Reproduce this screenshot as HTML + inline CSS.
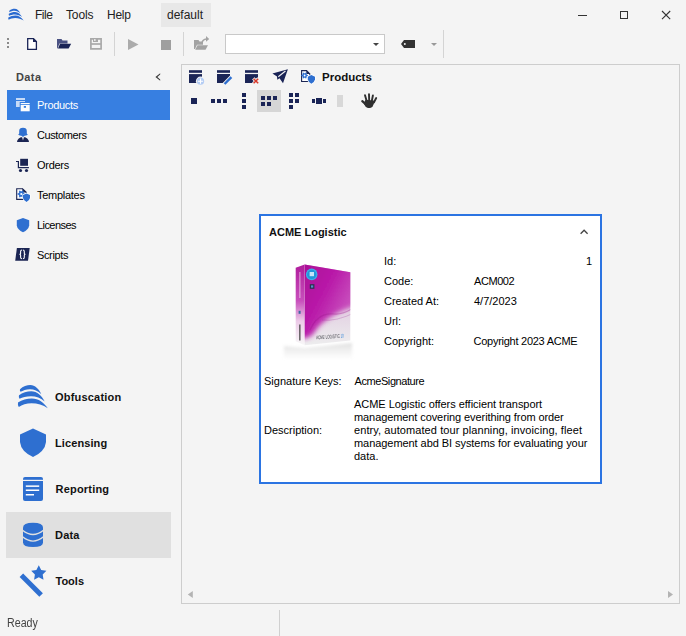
<!DOCTYPE html>
<html><head><meta charset="utf-8">
<style>
*{box-sizing:border-box;margin:0;padding:0}
html,body{width:686px;height:636px;overflow:hidden;background:#f4f4f4;font-family:"Liberation Sans",sans-serif;color:#000}
.a{position:absolute}
.t11{position:absolute;font-size:11px;line-height:13px;white-space:nowrap}
.t12{position:absolute;font-size:12px;line-height:14px;white-space:nowrap}
.b{font-weight:bold}
svg{position:absolute;overflow:visible}
</style></head><body>

<!-- ===== title / menu bar ===== -->
<svg style="left:0;top:0" width="30" height="30" viewBox="0 0 30 30">
  <g fill="#2a6ad0" transform="translate(8.3 8.7) scale(0.515 0.507) translate(-18 -385)">
    <path d="M20 389.2 C23 386 27 385 30.3 385 C35 385 39 389 41.3 394.2 C38 391 34 389.2 30 389.2 C26 389.2 23 390.5 20.5 391.8 Q19.5 390.5 20 389.2 Z"/>
    <path d="M19 395.2 C22.5 392.5 27 391.3 31.3 391.3 C37 391.3 42 396 44.7 401.5 C41 398 36 396.3 31 396.3 C26 396.3 22.5 397.5 19.5 398.8 Q18.4 397 19 395.2 Z"/>
    <path d="M18 402.6 C22 399.8 27 398.4 31.8 398.4 C38.5 398.4 44 402.5 47.8 408.3 C43 405 37.5 403.3 31.5 403.3 C26.5 403.3 22 404.8 18.8 407 Q17.5 405 18 402.6 Z"/>
  </g>
</svg>
<div class="t12" style="left:35px;top:8px;color:#222;letter-spacing:-0.5px">File</div>
<div class="t12" style="left:66px;top:8px;color:#222;letter-spacing:-0.14px">Tools</div>
<div class="t12" style="left:107px;top:8px;color:#222;letter-spacing:-0.25px">Help</div>
<div class="a" style="left:161px;top:3px;width:50px;height:24px;background:#e8e8e8"></div>
<div class="t12" style="left:167px;top:8px;color:#222">default</div>

<!-- window controls -->
<div class="a" style="left:578px;top:15px;width:9px;height:1px;background:#333"></div>
<div class="a" style="left:620px;top:11px;width:8px;height:8px;border:1px solid #333"></div>
<svg style="left:660px;top:9px" width="12" height="12" viewBox="660 9 12 12"><path d="M662 11 L670.2 19.2 M670.2 11 L662 19.2" stroke="#333" stroke-width="1.1"/></svg>

<!-- ===== toolbar ===== -->
<svg style="left:0;top:0" width="686" height="60" viewBox="0 0 686 60">
  <!-- grip -->
  <g fill="#8a8a8a"><rect x="7" y="38" width="2" height="2"/><rect x="7" y="42" width="2" height="2"/><rect x="7" y="46" width="2" height="2"/></g>
  <!-- new doc -->
  <path d="M27.7 38.7 H33.5 L36.4 41.6 V49.3 H27.7 Z" fill="#fff" stroke="#1a2456" stroke-width="1.3"/>
  <path d="M33 38 L37 42 H33 Z" fill="#1a2456"/>
  <!-- open folder -->
  <path d="M57 39 H61.5 L62.5 40.5 H67.5 V43.5 H59.5 L57.5 48.5 H57 Z" fill="#4a5283"/>
  <path d="M60 43.8 H71.2 L68.6 48.6 H58 Z" fill="#1a2456"/>
  <!-- save (disabled) -->
  <g fill="none" stroke="#a9a9a9" stroke-width="1.7">
    <path d="M90.9 38.9 H101.1 V48.9 H90.9 Z"/>
    <path d="M91 44 H101"/>
  </g>
  <rect x="93" y="38" width="5" height="4" fill="#a9a9a9"/>
  <rect x="94.2" y="39" width="1.3" height="2" fill="#f4f4f4"/>
  <!-- separators -->
  <rect x="114" y="32" width="1" height="24" fill="#d4d4d4"/>
  <rect x="183" y="32" width="1" height="24" fill="#d4d4d4"/>
  <rect x="443" y="30" width="1" height="28" fill="#d4d4d4"/>
  <!-- play / stop -->
  <path d="M128 39 L138.5 44.5 L128 50 Z" fill="#ababab"/>
  <rect x="161" y="40" width="10" height="10" fill="#9f9f9f"/>
  <!-- share folder -->
  <path d="M194 40 H198.5 L199.5 41.5 H203 V44.8 H197 L195 49 H194 Z" fill="#a3a3a3"/>
  <path d="M197.5 45.2 H208 L205.5 49.7 H195.2 Z" fill="#a3a3a3"/>
  <path d="M202 43 Q202.5 39.5 206.5 39" fill="none" stroke="#a3a3a3" stroke-width="1.5"/>
  <path d="M206 36 L209.2 38.9 L206 41.8 Z" fill="#a3a3a3"/>
  <!-- combo -->
  <rect x="225.5" y="34.5" width="159" height="19" fill="#fff" stroke="#c9c9c9" stroke-width="1"/>
  <path d="M373 43 H379 L376 46 Z" fill="#444"/>
  <!-- tag -->
  <path d="M404 40 H415 V48 H404 L401 44 Z" fill="#333"/>
  <circle cx="404.8" cy="44" r="1" fill="#f4f4f4"/>
  <path d="M431 43 H437 L434 46 Z" fill="#999"/>
</svg>

<!-- ===== sidebar ===== -->
<div class="t11 b" style="left:16px;top:71px;color:#444;letter-spacing:0.4px">Data</div>
<svg style="left:0;top:60px" width="180" height="210" viewBox="0 60 180 210">
  <path d="M160.2 73.2 L155.4 77 L160.2 80.8 L160.2 79.6 L157.4 77 L160.2 74.4 Z" fill="#3c3c3c"/>
  <rect x="7" y="90" width="163" height="30" fill="#377fe1"/>
  <!-- products icon -->
  <g fill="#c6daf7"><rect x="16" y="98" width="9" height="2"/><rect x="16" y="101" width="9" height="6"/></g>
  <rect x="19.7" y="102" width="10.8" height="10.3" fill="#377fe1"/>
  <g fill="#fdfdfd"><rect x="20.7" y="103" width="9" height="1.2"/><rect x="20.7" y="105" width="9" height="6.3"/></g>
  <rect x="23.8" y="106" width="2.2" height="1.8" fill="#377fe1"/>
  <!-- customers icon -->
  <path d="M19.2 133.4 V131 Q19.2 127.8 23 127.8 Q26.8 127.8 26.8 131 V133.4 L27.8 134.8 Q26 135.6 24.6 135.8 L23 136.9 L21.4 135.8 Q20 135.6 18.2 134.8 Z" fill="#2e6fd0"/>
  <path d="M17 142 L17.4 140.2 Q18.4 138.2 20.8 137.2 L22.1 137.3 L23 140.4 L23.9 137.3 L25.2 137.2 Q27.6 138.2 28.6 140.2 L29 142 Z" fill="#1b2553"/>
  <!-- orders icon -->
  <path d="M16 161.5 H18.4 V167.6 H28.9" fill="none" stroke="#1b2553" stroke-width="1.2"/>
  <rect x="20.2" y="158.8" width="7.8" height="7" fill="#1b2553"/>
  <circle cx="20.5" cy="170.5" r="1.6" fill="#1b2553"/><circle cx="26.5" cy="170.5" r="1.6" fill="#1b2553"/>
  <!-- templates icon -->
  <path d="M16.7 188.7 H22.5 L26.4 192.5 V199.4 H16.7 Z" fill="#fff" stroke="#1b2553" stroke-width="1.1"/>
  <path d="M22.4 188.2 L27 192.6 H22.4 Z" fill="#1b2553"/>
  <path d="M23.98 193.20 L25.04 193.31 L25.04 194.69 L23.98 194.80 L23.33 195.93 L23.77 196.89 L22.57 197.58 L21.95 196.72 L20.65 196.72 L20.03 197.58 L18.83 196.89 L19.27 195.93 L18.62 194.80 L17.56 194.69 L17.56 193.31 L18.62 193.20 L19.27 192.07 L18.83 191.11 L20.03 190.42 L20.65 191.28 L21.95 191.28 L22.57 190.42 L23.77 191.11 L23.33 192.07 Z" fill="#2e6fd0"/><circle cx="21.3" cy="194" r="1.1" fill="#fff"/>
  <path d="M26.5 192.6 L30.6 194.6 V198 Q30 201 26.5 202.6 Q23 201 22.4 198 V194.6 Z" fill="#fff"/>
  <path d="M26.5 193.4 L30 195 V198 Q29.4 200.6 26.5 202 Q23.6 200.6 23 198 V195 Z" fill="#2e6fd0"/>
  <!-- licenses icon -->
  <path d="M23 218 L29.2 220.2 V225.5 Q28.5 229.8 23 232.2 Q17.5 229.8 16.8 225.5 V220.2 Z" fill="#2e6fd0"/>
  <!-- scripts icon -->
  <path d="M16.9 248 H29.7 L28 260.7 H15.2 Z" fill="#1b2553"/>
  <g fill="none" stroke="#fff" stroke-width="1.1">
  <path d="M22 250 Q20.6 250 20.6 251.5 V253.5 Q20.6 254.3 19.4 254.3 Q20.6 254.3 20.6 255.1 V257.3 Q20.6 258.7 22 258.7"/>
  <path d="M22.9 250 Q24.3 250 24.3 251.5 V253.5 Q24.3 254.3 25.5 254.3 Q24.3 254.3 24.3 255.1 V257.3 Q24.3 258.7 22.9 258.7"/>
  </g>
</svg>
<div class="t11" style="left:37px;top:99px;color:#fff;letter-spacing:-0.3px">Products</div>
<div class="t11" style="left:37px;top:129px;letter-spacing:-0.4px">Customers</div>
<div class="t11" style="left:37px;top:159px;letter-spacing:-0.27px">Orders</div>
<div class="t11" style="left:37px;top:189px;letter-spacing:-0.28px">Templates</div>
<div class="t11" style="left:37px;top:219px;letter-spacing:-0.57px">Licenses</div>
<div class="t11" style="left:37px;top:249px;letter-spacing:-0.36px">Scripts</div>

<!-- bottom nav -->
<div class="a" style="left:6px;top:512px;width:165px;height:46px;background:#e0e0e0"></div>
<svg style="left:0;top:370px" width="180" height="240" viewBox="0 370 180 240">
  <!-- obfuscation -->
  <g fill="#2e6fd0" id="obf">
    <path d="M20 389.2 C23 386 27 385 30.3 385 C35 385 39 389 41.3 394.2 C38 391 34 389.2 30 389.2 C26 389.2 23 390.5 20.5 391.8 Q19.5 390.5 20 389.2 Z"/>
    <path d="M19 395.2 C22.5 392.5 27 391.3 31.3 391.3 C37 391.3 42 396 44.7 401.5 C41 398 36 396.3 31 396.3 C26 396.3 22.5 397.5 19.5 398.8 Q18.4 397 19 395.2 Z"/>
    <path d="M18 402.6 C22 399.8 27 398.4 31.8 398.4 C38.5 398.4 44 402.5 47.8 408.3 C43 405 37.5 403.3 31.5 403.3 C26.5 403.3 22 404.8 18.8 407 Q17.5 405 18 402.6 Z"/>
  </g>
  <!-- licensing shield -->
  <path d="M33 428.5 L46 434.5 V442 Q45 451.5 33 457 Q21 451.5 20 442 V434.5 Z" fill="#2e6fd0"/>
  <!-- reporting -->
  <rect x="23" y="477" width="20" height="24" rx="2" fill="#2e6fd0"/>
  <rect x="23" y="479.8" width="20" height="1.2" fill="#f4f4f4"/>
  <g fill="#fff"><rect x="25.8" y="485.4" width="13.4" height="1.5"/><rect x="25.8" y="489.5" width="13.4" height="1.5"/><rect x="25.8" y="494" width="8.2" height="1.5"/></g>
  <!-- data db -->
  <path d="M23 527.5 Q23 522.8 33 522.8 Q43 522.8 43 527.5 V542.5 Q43 547 33 547 Q23 547 23 542.5 Z" fill="#2e6fd0"/>
  <g fill="none" stroke="#e0e0e0" stroke-width="1.4">
    <path d="M22.5 530.2 Q33 538.8 43.5 530.2"/>
    <path d="M22.5 536.8 Q33 545.4 43.5 536.8"/>
  </g>
  <!-- tools wand -->
  <path d="M21.4 575.3 L41.1 594.9" stroke="#2e6fd0" stroke-width="5" fill="none"/>
  <path d="M38.8 565.2 L41.2 569.9 L46.4 570.7 L42.7 574.5 L43.5 579.7 L38.8 577.3 L34.1 579.7 L34.9 574.5 L31.2 570.7 L36.4 569.9 Z" fill="#2e6fd0"/>
</svg>
<div class="t11 b" style="left:55px;top:391px;color:#111;letter-spacing:0.2px">Obfuscation</div>
<div class="t11 b" style="left:55px;top:437px;color:#111;letter-spacing:0.1px">Licensing</div>
<div class="t11 b" style="left:55.5px;top:483px;color:#111;letter-spacing:0.2px">Reporting</div>
<div class="t11 b" style="left:55px;top:529px;color:#111;letter-spacing:0.2px">Data</div>
<div class="t11 b" style="left:55.5px;top:575px;color:#111">Tools</div>

<!-- ===== main panel ===== -->
<div class="a" style="left:181px;top:64px;width:499px;height:540px;border:1px solid #cdcdcd"></div>

<svg style="left:180px;top:60px" width="220" height="60" viewBox="180 60 220 60">
  <g fill="#1a2456">
    <!-- new -->
    <rect x="189" y="70.2" width="13" height="2.6"/>
    <rect x="189" y="74.1" width="13" height="8.9"/>
    <!-- edit -->
    <rect x="217" y="70.2" width="13" height="2.6"/>
    <path d="M217 74.1 H230 V76.5 L223.5 83 H217 Z"/>
    <!-- delete -->
    <rect x="245" y="70.2" width="13" height="2.6"/>
    <rect x="245" y="74.1" width="13" height="8.9"/>
    <!-- send -->
    <path d="M287.9 69.2 L272.4 73.5 L277 76.5 L277.3 79.7 L279.5 78.2 L283 83.2 Z"/>
  </g>
  <path d="M278.3 76.8 L285.5 71" stroke="#f4f4f4" stroke-width="1.1"/>
  <!-- plus badge -->
  <circle cx="200.5" cy="81.2" r="4.6" fill="#f4f4f4"/>
  <circle cx="200.5" cy="81.2" r="3.6" fill="#b3ccf4"/>
  <path d="M200.5 78.6 V83.8 M197.9 81.2 H203.1" stroke="#fff" stroke-width="1.1"/>
  <!-- pencil -->
  <path d="M224.2 84.4 L231.8 76.8" stroke="#f4f4f4" stroke-width="4.2"/>
  <path d="M224.6 84 L231.4 77.2" stroke="#2e6fd0" stroke-width="2.4"/>
  <!-- red x -->
  <path d="M253.3 78.4 L258.5 83.6 M258.5 78.4 L253.3 83.6" stroke="#f4f4f4" stroke-width="3.4"/>
  <path d="M253.6 78.7 L258.2 83.3 M258.2 78.7 L253.6 83.3" stroke="#d83a2c" stroke-width="1.5"/>
  <!-- templates -->
  <path d="M301.6 70.6 H306.5 L309.8 73.9 V81.5 H301.6 Z" fill="#fff" stroke="#1b2553" stroke-width="1.1"/>
  <path d="M306.3 70 L310.4 74.1 H306.3 Z" fill="#1b2553"/>
  <path d="M306.90 74.82 L307.84 74.90 L307.84 76.10 L306.90 76.18 L306.34 77.15 L306.74 78.01 L305.70 78.61 L305.16 77.83 L304.04 77.83 L303.50 78.61 L302.46 78.01 L302.86 77.15 L302.30 76.18 L301.36 76.10 L301.36 74.90 L302.30 74.82 L302.86 73.85 L302.46 72.99 L303.50 72.39 L304.04 73.17 L305.16 73.17 L305.70 72.39 L306.74 72.99 L306.34 73.85 Z" fill="#2e6fd0"/><circle cx="304.6" cy="75.5" r="0.9" fill="#fff"/>
  <path d="M311.4 74.2 L315.6 76.2 V79.6 Q315 82.8 311.4 84.4 Q307.8 82.8 307.2 79.6 V76.2 Z" fill="#fff"/>
  <path d="M311.4 75 L315 76.7 V79.6 Q314.4 82.3 311.4 83.7 Q308.4 82.3 307.8 79.6 V76.7 Z" fill="#2e6fd0"/>
  <!-- row 2 -->
  <rect x="257" y="90" width="24" height="22" fill="#d6d6d6"/>
  <g fill="#1a2456">
    <rect x="191" y="98" width="6" height="6"/>
    <rect x="211" y="99" width="4" height="4"/><rect x="217" y="99" width="4" height="4"/><rect x="223" y="99" width="4" height="4"/>
    <rect x="242" y="93" width="4" height="4"/><rect x="242" y="99" width="4" height="4"/><rect x="242" y="105" width="4" height="4"/>
    <rect x="261" y="96" width="4" height="4"/><rect x="267" y="96" width="4" height="4"/><rect x="273" y="96" width="4" height="4"/>
    <rect x="261" y="102" width="4" height="4"/><rect x="267" y="102" width="4" height="4"/>
    <rect x="289" y="93" width="4" height="4"/><rect x="295" y="93" width="4" height="4"/>
    <rect x="289" y="99" width="4" height="4"/><rect x="295" y="99" width="4" height="4"/>
    <rect x="289" y="105" width="4" height="4"/>
    <rect x="312" y="99" width="3" height="4"/><rect x="316" y="98" width="6" height="6"/><rect x="323" y="99" width="3" height="4"/>
  </g>
  <rect x="337" y="95" width="6" height="12" fill="#d8d8d8"/>
  <!-- hand -->
  <g stroke="#2f2f2f" stroke-linecap="round" fill="none">
    <path d="M362.3 101.2 L366.5 104.8" stroke-width="2.3"/>
    <path d="M365 95.2 L366.8 101.5" stroke-width="1.9"/>
    <path d="M369 94.2 L369.2 101" stroke-width="1.9"/>
    <path d="M372.9 95.5 L371.8 101" stroke-width="1.9"/>
    <path d="M376.2 98 L374 102.2" stroke-width="1.9"/>
  </g>
  <path d="M365.5 99.8 L375.2 100.8 L372.6 106.6 Q371.6 108 370 108 H368 Q366.8 108 365.5 106.6 L363.8 103.8 Z" fill="#2f2f2f"/>
</svg>
<div class="t11 b" style="left:322px;top:71px;font-size:11.5px;color:#111">Products</div>

<!-- ===== card ===== -->
<div class="a" style="left:259px;top:214px;width:343px;height:270px;border:2px solid #2b74e2;background:#fff"></div>
<div class="t11 b" style="left:269px;top:226px;color:#111">ACME Logistic</div>
<svg style="left:575px;top:225px" width="20" height="14" viewBox="575 225 20 14"><path d="M580.6 233.8 L584.1 230.2 L587.6 233.8" fill="none" stroke="#444" stroke-width="1.3"/></svg>

<svg style="left:265px;top:255px" width="110" height="110" viewBox="265 255 110 110">
  <defs>
    <linearGradient id="gm" x1="0" y1="0" x2="1" y2="0.7">
      <stop offset="0" stop-color="#a80c92"/>
      <stop offset="0.5" stop-color="#b91aa9"/>
      <stop offset="1" stop-color="#cf68c6"/>
    </linearGradient>
    <linearGradient id="gb" x1="0" y1="0" x2="0" y2="1">
      <stop offset="0" stop-color="#d9a6d4"/>
      <stop offset="0.7" stop-color="#e6dae6"/>
      <stop offset="1" stop-color="#ededee"/>
    </linearGradient>
    <linearGradient id="gs" x1="0" y1="0" x2="0" y2="1">
      <stop offset="0" stop-color="#b01c9c"/>
      <stop offset="0.45" stop-color="#c850bc"/>
      <stop offset="0.7" stop-color="#eccbe8"/>
      <stop offset="1" stop-color="#f8f8f8"/>
    </linearGradient>
    <linearGradient id="gr" x1="0" y1="0" x2="0" y2="1">
      <stop offset="0" stop-color="#b8b8b8" stop-opacity="0.45"/>
      <stop offset="1" stop-color="#d0d0d0" stop-opacity="0"/>
    </linearGradient>
    <filter id="bl" x="-20%" y="-20%" width="140%" height="140%"><feGaussianBlur stdDeviation="0.5"/></filter>
    <filter id="bl2" x="-30%" y="-30%" width="160%" height="160%"><feGaussianBlur stdDeviation="2.4"/></filter>
    <filter id="bl3" x="-30%" y="-30%" width="160%" height="160%"><feGaussianBlur stdDeviation="1.8"/></filter>
    <clipPath id="cf"><path d="M304.7 264.6 L350.3 272.2 V340.5 L304.7 345.3 Z"/></clipPath>
  </defs>
  <path d="M284 346 L304.7 348 L352 343 V360 H284 Z" fill="url(#gr)" filter="url(#bl3)"/>
  <g filter="url(#bl)">
  <path d="M295.7 267.7 L304.7 264.6 V345.3 L295.7 341.3 Z" fill="url(#gs)"/>
  <path d="M304.7 264.6 L350.3 272.2 V340.5 L304.7 345.3 Z" fill="url(#gb)"/>
  <g clip-path="url(#cf)">
    <path d="M298 258 H358 V306 Q346 308 336 314 Q320 322 314 333 Q309 340 298 338 Z" fill="url(#gm)" filter="url(#bl2)"/>
    <path d="M310 330 Q318 312 334 314 Q344 315 356 306" fill="none" stroke="#9a1a8c" stroke-width="1.2" opacity="0.35"/>
    <path d="M322 320 Q336 322 356 312" fill="none" stroke="#a0309a" stroke-width="0.9" opacity="0.3"/>
  </g>
  <circle cx="311.7" cy="274.4" r="5.8" fill="#3cb0ea"/>
  <circle cx="311.7" cy="274.4" r="4.6" fill="#2196da"/>
  <rect x="309.6" y="272" width="4.4" height="4.2" fill="#e0f2ff" opacity="0.85"/>
  <rect x="309.8" y="284.2" width="4.6" height="4.6" fill="#2a3450"/>
  <rect x="311" y="285.4" width="2.2" height="2.2" fill="#5a8ad0"/>
  <rect x="299.2" y="272" width="1.3" height="26" fill="#f4dcf0" opacity="0.55"/>
  <rect x="298.6" y="310.8" width="2" height="3" fill="#3a6aa0"/>
  <rect x="299" y="324.5" width="1.6" height="16" fill="#333" opacity="0.7"/>
  <text x="330" y="338.4" font-family="Liberation Sans" font-size="5.2" fill="#44444c" text-anchor="middle" transform="rotate(-4 330 337)" textLength="28" lengthAdjust="spacingAndGlyphs">ACME LOGISTIC <tspan fill="#3a88d8">10</tspan></text>
  </g>
</svg>

<div class="t11" style="left:384px;top:255px">Id:</div>
<div class="t11" style="left:384px;top:275px">Code:</div>
<div class="t11" style="left:384px;top:295px">Created At:</div>
<div class="t11" style="left:384px;top:315px">Url:</div>
<div class="t11" style="left:384px;top:335px">Copyright:</div>
<div class="t11" style="left:474px;top:275px;letter-spacing:-0.43px">ACM002</div>
<div class="t11" style="left:474px;top:295px">4/7/2023</div>
<div class="t11" style="left:473.5px;top:335px;letter-spacing:-0.26px">Copyright 2023 ACME</div>
<div class="t11" style="left:586px;top:255px">1</div>
<div class="t11" style="left:264px;top:375px">Signature Keys:</div>
<div class="t11" style="left:354.5px;top:375px;letter-spacing:-0.42px">AcmeSignature</div>
<div class="t11" style="left:264px;top:424px">Description:</div>
<div class="a" style="left:354px;top:398px;font-size:11px;line-height:13px;white-space:pre"><span style="letter-spacing:-0.04px">ACME Logistic offers efficient transport</span>
<span style="letter-spacing:-0.09px">management covering everithing from order</span>
<span style="letter-spacing:0.08px">entry, automated tour planning, invoicing, fleet</span>
<span style="letter-spacing:-0.06px">management abd BI systems for evaluating your</span>
data.</div>

<svg style="left:180px;top:585px" width="500" height="18" viewBox="180 585 500 18">
  <path d="M192.8 591 L187.8 594.5 L192.8 598 Z" fill="#b3b3b3"/>
  <path d="M668 591 L673 594.5 L668 598 Z" fill="#b3b3b3"/>
</svg>
<!-- status bar -->
<div class="t12" style="left:7px;top:616px;color:#444;transform:scaleX(0.89);transform-origin:0 0">Ready</div>
<div class="a" style="left:279px;top:610px;width:1px;height:26px;background:#d0d0d0"></div>

</body></html>
